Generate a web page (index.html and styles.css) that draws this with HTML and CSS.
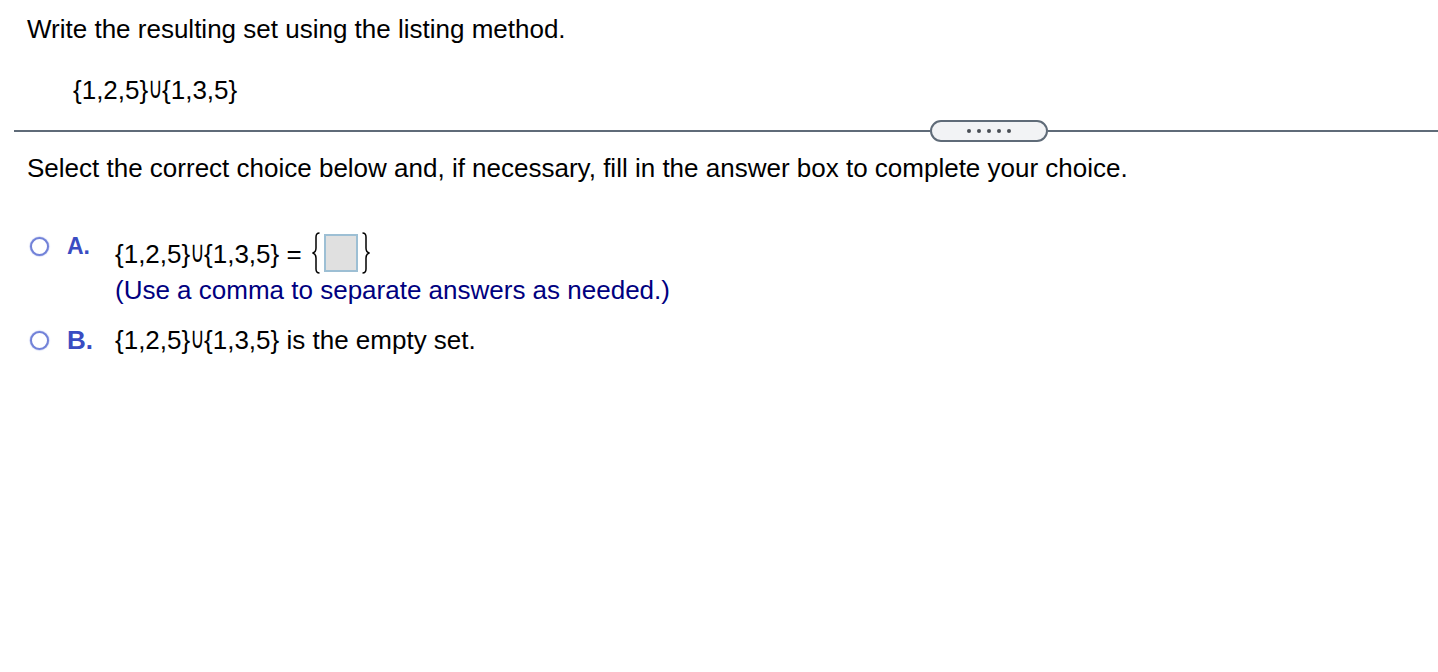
FILE: index.html
```html
<!DOCTYPE html>
<html lang="en">
<head>
<meta charset="utf-8">
<title>Set union question</title>
<link rel="stylesheet" href="styles.css">
</head>
<body>
<div class="question">
  <div class="prompt">Write the resulting set using the listing method.</div>
  <div class="expr">{1,2,5}<span class="cup">∪</span>{1,3,5}</div>
</div>
<div class="divider">
  <div class="rule rule-left"></div>
  <div class="pill"><span class="dot"></span><span class="dot"></span><span class="dot"></span><span class="dot"></span><span class="dot"></span></div>
  <div class="rule rule-right"></div>
</div>
<div class="instructions">Select the correct choice below and, if necessary, fill in the answer box to complete your choice.</div>
<div class="options">
  <div class="option option-a">
    <span class="radio radio-a"></span>
    <span class="label label-a">A.</span>
    <div class="body">
      <div class="line">
        <span class="text text-a">{1,2,5}<span class="cup">∪</span>{1,3,5} = </span>
        <span class="set">
          <svg class="brace" width="10" height="42" viewBox="0 0 10 42"><path d="M8.5 1 C5.5 1 5 2.5 5 5 L5 16 C5 19 4 20.5 1.5 21 C4 21.5 5 23 5 26 L5 37 C5 39.5 5.5 41 8.5 41" fill="none" stroke="#000" stroke-width="1.5"/></svg>
          <span class="box"></span>
          <svg class="brace" width="10" height="42" viewBox="0 0 10 42"><path d="M1.5 1 C4.5 1 5 2.5 5 5 L5 16 C5 19 6 20.5 8.5 21 C6 21.5 5 23 5 26 L5 37 C5 39.5 4.5 41 1.5 41" fill="none" stroke="#000" stroke-width="1.5"/></svg>
        </span>
      </div>
      <div class="hint">(Use a comma to separate answers as needed.)</div>
    </div>
  </div>
  <div class="option option-b">
    <span class="radio radio-b"></span>
    <span class="label label-b">B.</span>
    <div class="body">
      <div class="text">{1,2,5}<span class="cup">∪</span>{1,3,5} is the empty set.</div>
    </div>
  </div>
</div>
</body>
</html>
```

FILE: styles.css
```css
html, body {
  margin: 0;
  padding: 0;
  background: #ffffff;
}

body {
  font-family: "Liberation Sans", Arial, sans-serif;
  font-size: 26px;
  line-height: 30px;
  color: #000000;
}

.cup {
  display: inline-block;
  font-family: "DejaVu Sans", sans-serif;
  font-size: 23px;
  line-height: 20px;
  transform: scale(0.85, 1.3);
  transform-origin: 50% 100%;
  margin: 0 -1.5px;
}

.question {
  padding: 14px 0 0 27px;
}

.expr {
  margin-top: 31px;
  padding-left: 46px;
}

.divider {
  display: flex;
  align-items: center;
  margin: 15px 0 0 14px;
  height: 22px;
}

.rule {
  height: 2px;
  background: #5f6b78;
}

.rule-left {
  flex: 0 0 916px;
}

.rule-right {
  flex: 1 1 auto;
}

.pill {
  box-sizing: border-box;
  width: 118px;
  height: 22px;
  border: 2px solid #5f6b78;
  border-radius: 11px;
  background: #f2f3f5;
  display: flex;
  align-items: center;
  justify-content: center;
  gap: 6px;
}

.dot {
  width: 4px;
  height: 4px;
  border-radius: 50%;
  background: #4a4f55;
}

.instructions {
  margin-top: 11px;
  padding-left: 27px;
}

.options {
  margin-top: 49px;
  padding-left: 30px;
}

.option {
  display: flex;
  align-items: flex-start;
}

.option-b {
  margin-top: 20px;
}

.radio {
  box-sizing: border-box;
  flex: 0 0 19px;
  width: 19px;
  height: 19px;
  border: 2.5px solid #7282d8;
  border-radius: 50%;
  background: #ffffff;
  box-shadow: 0 0 1px 0.5px rgba(140, 155, 230, 0.6);
}

.radio-a {
  margin-top: 5px;
}

.radio-b {
  margin-top: 6px;
}

.label {
  flex: 0 0 48px;
  margin-left: 18px;
  font-weight: bold;
  color: #3a4cc2;
}

.label-a {
  font-size: 23px;
  line-height: 24px;
  margin-top: 2px;
}

.line {
  display: flex;
  align-items: flex-start;
}

.text-a {
  margin-top: 7px;
  white-space: pre;
}

.set {
  display: flex;
  align-items: flex-start;
  gap: 3px;
  margin-left: 2px;
}

.box {
  box-sizing: border-box;
  width: 34px;
  height: 38px;
  margin-top: 2px;
  border: 2px solid #9dbfd4;
  background: #e0e0e0;
}

.hint {
  margin-top: 1px;
  color: #000080;
}
```
